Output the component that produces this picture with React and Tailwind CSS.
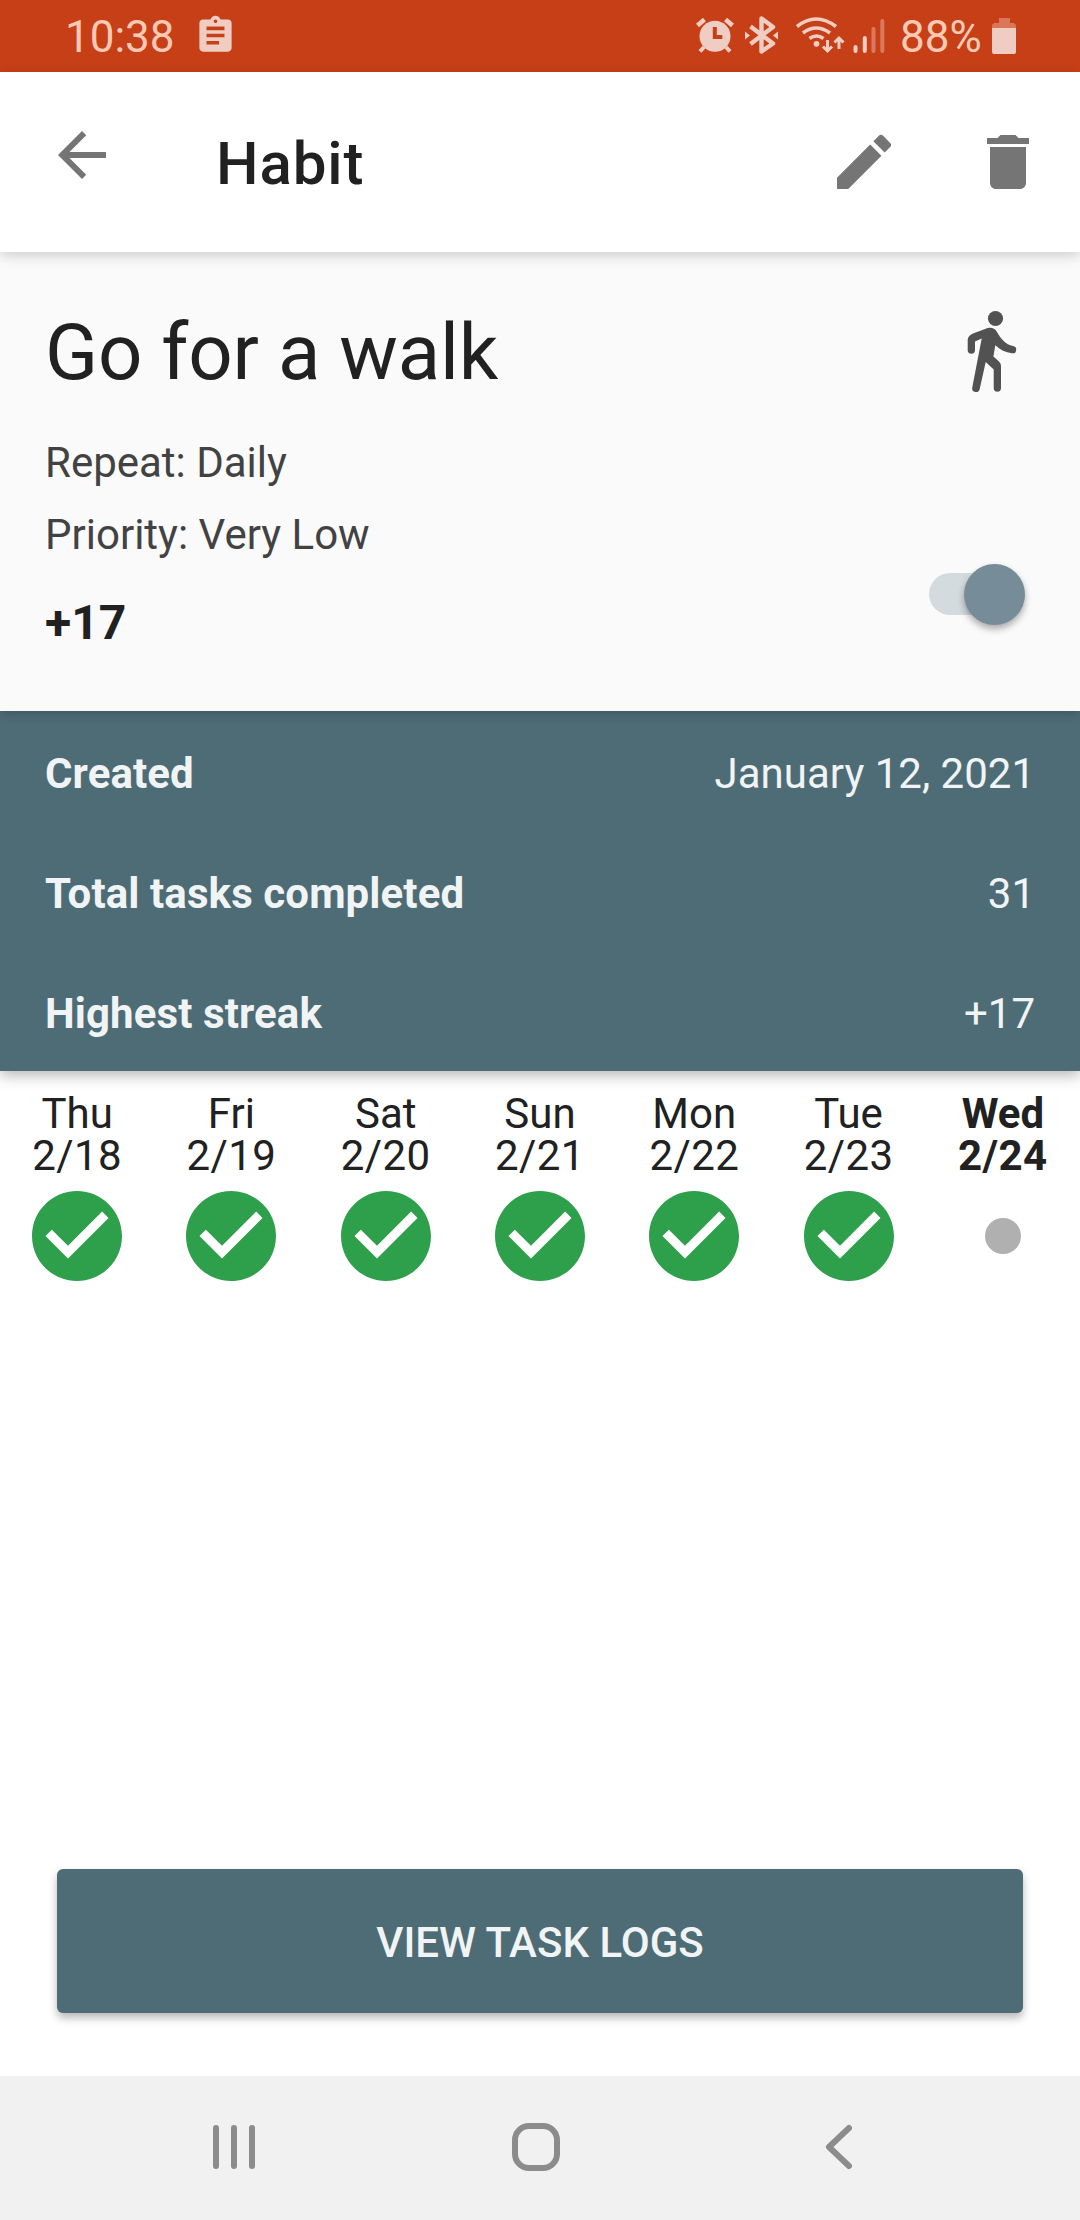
import { useState } from 'react';
import { MdAssignment, MdArrowBack, MdEdit, MdDelete, MdCheckCircle } from 'react-icons/md';

const stats = [
  { label: 'Created', value: 'January 12, 2021' },
  { label: 'Total tasks completed', value: '31' },
  { label: 'Highest streak', value: '+17' },
];

const days = [
  { day: 'Thu', date: '2/18', done: true },
  { day: 'Fri', date: '2/19', done: true },
  { day: 'Sat', date: '2/20', done: true },
  { day: 'Sun', date: '2/21', done: true },
  { day: 'Mon', date: '2/22', done: true },
  { day: 'Tue', date: '2/23', done: true },
  { day: 'Wed', date: '2/24', done: false },
];

function StatusIcons() {
  return (
    <svg width="214" height="72" viewBox="690 0 214 72" fill="none" stroke="#f0cdc2" strokeLinecap="butt">
      {/* alarm */}
      <circle cx="715" cy="36.3" r="15.5" fill="#f0cdc2" stroke="none" />
      <path d="M697.5 25.5l7-6M732.5 25.5l-7-6" strokeWidth="4.6" />
      <path d="M704 47l-4 4.5M726 47l4 4.5" strokeWidth="4" />
      <path d="M714.8 27v10h7.5" stroke="#c63f17" strokeWidth="4" />
      {/* bluetooth */}
      <path d="M750.5 26.5l22.5 17-11.500 8V18.500l11.500 8.500-22.500 17" strokeWidth="4.4" strokeLinejoin="round" />
      <path d="M745 31.500v8l5-4zM778 31.500v8l-5-4z" fill="#f0cdc2" stroke="none" />
      {/* wifi */}
      <path d="M797 26.500q19-15 39 0M803 33q13-10 27 0M809.500 38.500q7-5 14 0" strokeWidth="3.6" />
      <circle cx="816.5" cy="43.8" r="2.9" fill="#f0cdc2" stroke="none" />
      <path d="M827.500 40v11M823 46.500l4.500 4.500 4.500-4.500M839 49V38M834.500 42.500l4.500-4.500 4.500 4.500" strokeWidth="3" />
      {/* signal */}
      <g strokeWidth="4" strokeLinecap="round">
        <path d="M855.500 47v4M864.800 38v13" />
        <path d="M873.500 29v22M882.300 21v30" stroke="#d97a5d" />
      </g>
    </svg>
  );
}

function StatusBar() {
  return (
    <div className="flex h-[72px] items-center bg-[#c63f17] text-[44px] leading-none text-[#fcc9b5]">
      <span className="ml-[65px] w-[127px] pt-[2px]">10:38</span>
      <MdAssignment className="ml-[2px] -mt-[2px] size-[43px] text-[#f0cdc2]" />
      <div className="ml-auto mr-[64px] flex items-center">
        <StatusIcons />
        <span className="-ml-[4px] w-[82px] pt-[2px]">88%</span>
        <svg className="ml-[10px] -mt-[1px]" width="24" height="37" viewBox="0 0 24 37">
          <path d="M7 1h11v5h4l2 2v4H0V8l2-2h5z" fill="#dc7658" />
          <path d="M0 11h24v24a2 2 0 0 1-2 2H2a2 2 0 0 1-2-2z" fill="#f0cdc2" />
        </svg>
      </div>
    </div>
  );
}

function WalkIcon() {
  return (
    <svg className="ml-[37px]" width="52" height="84" viewBox="966 309 52 84" fill="#525252">
      <circle cx="995.5" cy="318.5" r="7.6" />
      <path d="M967.700 350V340c0-3 2-5 5.300-6.500l14-5.200c4-1.300 8 0 10 3.700 4 7 8.500 12.500 16 14a3.600 3.600 0 0 1-1 7.300c-6.500-.7-12-3.500-16.700-8l-1.900 11.200 5.600 5c1.500 1.500 2 3 2 5V388a3.600 3.600 0 0 1-7.300 0V369.500l-8-7.500-6 27a3.800 3.800 0 0 1-7.500-1.200L981.700 338.500l-6.700 3V350a3.600 3.600 0 0 1-7.300 0z" />
    </svg>
  );
}

function Toggle({ on, onChange }) {
  return (
    <button
      role="switch"
      aria-checked={on}
      onClick={() => onChange(!on)}
      className={`flex h-[42px] w-[96px] items-center rounded-full ${on ? 'justify-end bg-[#d3dbde]' : 'justify-start bg-[#bdbdbd]'}`}
    >
      <span className={`size-[61px] shrink-0 rounded-full shadow-[0_4px_7px_rgba(0,0,0,0.32)] ${on ? 'bg-[#768d99]' : 'bg-[#ececec]'}`} />
    </button>
  );
}

export default function App() {
  const [active, setActive] = useState(true);

  return (
    <div className="flex h-[2220px] w-[1080px] flex-col overflow-hidden bg-white font-[Roboto,sans-serif] text-[#212121]">
      <StatusBar />

      {/* App bar */}
      <header className="relative z-20 flex h-[180px] items-center bg-white pr-[36px] text-[#757575] shadow-[0_4px_12px_rgba(0,0,0,0.17)]">
        <MdArrowBack className="-mt-[14px] ml-[46px] size-[72px]" />
        <h1 className="ml-[98px] mt-[3px] text-[60px] font-medium tracking-[0.9px] text-[#212121]">Habit</h1>
        <MdEdit className="ml-auto size-[72px]" />
        <MdDelete className="ml-[72px] size-[72px]" />
      </header>

      {/* Habit summary */}
      <section className="relative z-10 flex h-[459px] justify-between bg-[#fafafa] pl-[45px] shadow-[0_3px_10px_rgba(0,0,0,0.2)]">
        <div className="pt-[55px]">
          <h2 className="text-[78px] leading-[92px] tracking-[-0.2px]">Go for a walk</h2>
          <p className="mt-[28px] text-[42px] leading-[72px] text-[#424242]">Repeat: Daily</p>
          <p className="text-[42px] leading-[72px] text-[#424242]">Priority: Very Low</p>
          <p className="mt-[20px] text-[48px] font-bold leading-[64px]">+17</p>
        </div>
        <div className="flex w-[151px] flex-col gap-[180px] pt-[57px]">
          <WalkIcon />
          <Toggle on={active} onChange={setActive} />
        </div>
      </section>

      {/* Stats */}
      <section className="h-[360px] bg-[#4e6c76] shadow-[0_4px_14px_rgba(0,0,0,0.3)]">
        {stats.map(({ label, value }) => (
          <div key={label} className="flex h-[120px] items-center justify-between px-[45px] pt-[4px] text-[42px] text-[#f1f4f5]">
            <span className="font-bold tracking-[0.1px]">{label}</span>
            <span>{value}</span>
          </div>
        ))}
      </section>

      {/* Last seven days */}
      <section className="grid grid-cols-7 pt-[22px]">
        {days.map(({ day, date, done }) => (
          <div key={day} className="flex flex-col items-center">
            <p className={`text-center text-[42px] leading-[42px] ${done ? '' : 'font-bold'}`}>
              {day}
              <br />
              <span className="tracking-[0.4px]">{date}</span>
            </p>
            <div className="mt-[14px] flex size-[90px] items-center justify-center">
              {done ? (
                <MdCheckCircle className="size-[108px] shrink-0 text-[#2e9f4b]" />
              ) : (
                <span className="size-[36px] rounded-full bg-[#b0b0b0]" />
              )}
            </div>
          </div>
        ))}
      </section>

      <button className="mx-[57px] mb-[63px] mt-auto h-[144px] rounded-[6px] bg-[#4e6c76] pt-[3px] text-[42px] font-medium text-[#f1f4f5] shadow-[0_5px_8px_rgba(0,0,0,0.28)]">
        VIEW TASK LOGS
      </button>

      {/* System navigation */}
      <nav className="flex h-[144px] items-center bg-[#f1f1f1] pb-[2px] pl-[213px] text-[#8c8c8c]">
        <svg width="42" height="48" fill="none" stroke="currentColor" strokeWidth="6" strokeLinecap="round">
          <path d="M3 5v38M21 5v38M39 5v38" />
        </svg>
        <svg className="ml-[257px]" width="48" height="48" fill="none" stroke="currentColor" strokeWidth="6">
          <rect x="3" y="3" width="42" height="42" rx="14" />
        </svg>
        <svg className="ml-[265px]" width="27" height="48" fill="none" stroke="currentColor" strokeWidth="6" strokeLinecap="round" strokeLinejoin="round">
          <path d="M24 5L4 24l20 19" />
        </svg>
      </nav>
    </div>
  );
}
